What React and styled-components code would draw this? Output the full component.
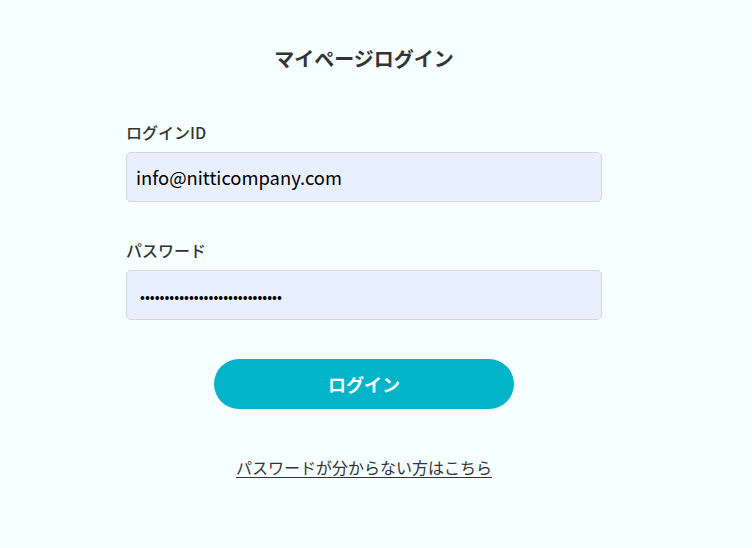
import React from "react";
import styled, { createGlobalStyle } from "styled-components";

const Global = createGlobalStyle`
  html, body { margin: 0; padding: 0; background: #f5ffff; }
  body { font-family: "Noto Sans CJK JP", "Noto Sans", sans-serif; color: #333; }
`;

const Page = styled.main`
  width: 728px;
  padding-top: 44px;
  display: flex;
  flex-direction: column;
  align-items: center;
`;

const Title = styled.h1`
  margin: 0;
  font-size: 20px;
  line-height: 30px;
  font-weight: 700;
  color: #333;
`;

const Form = styled.form`
  width: 476px;
  margin-top: 46px;
  display: flex;
  flex-direction: column;
`;

const Field = styled.div`
  display: flex;
  flex-direction: column;
  gap: 8px;
  margin-top: ${(p) => p.$mt || 0}px;
`;

const Label = styled.label`
  font-size: 16px;
  line-height: 24px;
  font-weight: 500;
  color: #333;
`;

const Input = styled.input`
  box-sizing: border-box;
  width: 100%;
  height: 50px;
  padding: 0 9px 0 ${(p) => p.$padLeft || 9}px;
  border: 1px solid #d3d8de;
  border-radius: 5px;
  background: #e8f0fe;
  font-family: "Noto Sans CJK JP", "Noto Sans", sans-serif;
  font-size: ${(p) => p.$size || 18.4}px;
  color: #000;
  outline: none;
`;

const Button = styled.button`
  align-self: center;
  margin-top: 39px;
  width: 300px;
  height: 50px;
  border: none;
  border-radius: 25px;
  background: #02b3c9;
  color: #fff;
  font-family: "Noto Sans CJK JP", "Noto Sans", sans-serif;
  font-size: 18px;
  font-weight: 700;
`;

const Link = styled.a`
  align-self: center;
  margin-top: 46px;
  font-size: 16px;
  line-height: 24px;
  color: #333;
  text-decoration: underline;
  text-underline-offset: 3px;
`;

export default function App() {
  return (
    <>
      <Global />
      <Page>
        <Title>マイページログイン</Title>
        <Form onSubmit={(e) => e.preventDefault()}>
          <Field>
            <Label>ログインID</Label>
            <Input type="text" defaultValue="info@nitticompany.com" />
          </Field>
          <Field $mt={36}>
            <Label>パスワード</Label>
            <Input
              type="password"
              $size={14.4}
              $padLeft={13}
              defaultValue="nitticompanypassword123456789"
            />
          </Field>
          <Button type="submit">ログイン</Button>
          <Link href="#">パスワードが分からない方はこちら</Link>
        </Form>
      </Page>
    </>
  );
}
